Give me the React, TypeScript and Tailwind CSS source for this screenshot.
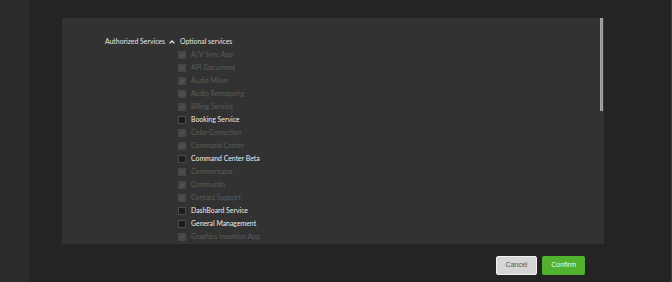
import React from "react";

interface Service {
  name: string;
  enabled: boolean;
}

const services: Service[] = [
  { name: "A/V Sync App", enabled: false },
  { name: "API Document", enabled: false },
  { name: "Audio Mixer", enabled: false },
  { name: "Audio Remapping", enabled: false },
  { name: "Billing Service", enabled: false },
  { name: "Booking Service", enabled: true },
  { name: "Color Correction", enabled: false },
  { name: "Command Center", enabled: false },
  { name: "Command Center Beta", enabled: true },
  { name: "Commentator", enabled: false },
  { name: "Community", enabled: false },
  { name: "Contact Support", enabled: false },
  { name: "DashBoard Service", enabled: true },
  { name: "General Management", enabled: true },
  { name: "Graphics Insertion App", enabled: false },
];

function Box({ enabled }: { enabled: boolean }) {
  if (enabled) {
    return <span className="w-[8px] h-[8px] shrink-0 bg-[#1c1c1c] border border-[#4a4a4a]" />;
  }
  return (
    <span className="w-[8px] h-[8px] shrink-0 bg-[#474747] flex items-center justify-center">
      <svg width="6" height="6" viewBox="0 0 6 6" fill="none">
        <path d="M0.8 3.1 L2.4 4.6 L5.2 1.3" stroke="#5e5e5e" strokeWidth="1" />
      </svg>
    </span>
  );
}

export default function App() {
  return (
    <div className="w-[672px] h-[282px] flex overflow-hidden font-['Lato',sans-serif]">
      <div className="w-[29px] bg-[#2b2b2b]" />
      <div className="flex-1 bg-[#242424] border-r border-[#3a3a3a] pt-[18px] pl-[33px] flex flex-col">
        <div className="relative w-[542px] h-[226px] bg-[#323232] overflow-hidden">
          <div className="absolute right-[1px] top-0 w-[3px] h-[93px] bg-[#8c8c8c] border-x border-[#a8a8a8]" />
          <div className="flex pt-[17px]">
            <div className="w-[103px] h-[13px] flex items-center justify-end text-[6.9px] text-[#e4e4e4] leading-none">
              Authorized Services
            </div>
            <div className="w-[13px] h-[13px] flex items-center justify-center">
              <svg width="6" height="4" viewBox="0 0 6 4" fill="none">
                <path d="M0.6 3.4 L3 1 L5.4 3.4" stroke="#e8e8e8" strokeWidth="1.3" />
              </svg>
            </div>
            <div className="flex flex-col">
              <div className="h-[13px] flex items-center pl-[2px] text-[6.9px] text-[#e4e4e4] leading-none">
                Optional services
              </div>
              {services.map((s) => (
                <div key={s.name} className="h-[13px] flex items-center gap-[5px] leading-none">
                  <Box enabled={s.enabled} />
                  <span className={`text-[6.9px] ${s.enabled ? "text-[#ececec]" : "text-[#5c5c5c]"}`}>
                    {s.name}
                  </span>
                </div>
              ))}
            </div>
          </div>
        </div>
        <div className="flex justify-end gap-[5px] mt-[12px] pr-[86px]">
          <button className="w-[41px] h-[19px] rounded-[2px] bg-[#d6d6d6] border border-[#f0f0f0] text-[7px] text-[#555] font-['Liberation_Sans',sans-serif]">
            Cancel
          </button>
          <button className="w-[43px] h-[19px] rounded-[2px] bg-[#52b12f] text-[7px] text-[#eaffe0] font-['Liberation_Sans',sans-serif]">
            Confirm
          </button>
        </div>
      </div>
    </div>
  );
}
